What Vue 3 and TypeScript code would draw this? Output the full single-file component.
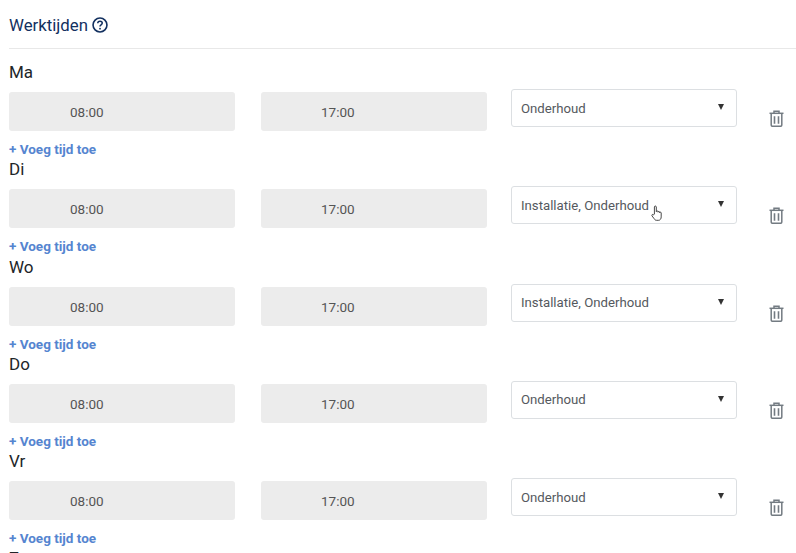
<script setup lang="ts">
interface Day {
  name: string
  services: string
  cursor?: boolean
}
const days: Day[] = [
  { name: 'Ma', services: 'Onderhoud' },
  { name: 'Di', services: 'Installatie, Onderhoud', cursor: true },
  { name: 'Wo', services: 'Installatie, Onderhoud' },
  { name: 'Do', services: 'Onderhoud' },
  { name: 'Vr', services: 'Onderhoud' },
]
</script>

<template>
  <div class="page">
    <header class="head">
      <h2 class="title">Werktijden</h2>
      <svg class="help" width="16" height="16" viewBox="0 0 17 17" fill="none">
        <circle cx="8.5" cy="8.5" r="7.4" stroke="#12305f" stroke-width="1.7" />
        <path d="M6.1 6.7c0-1.4 1.1-2.3 2.4-2.3s2.4.9 2.4 2.1c0 1.9-2.4 1.8-2.4 3.6" stroke="#12305f" stroke-width="1.6" fill="none" />
        <circle cx="8.5" cy="12.4" r="1" fill="#12305f" />
      </svg>
    </header>
    <section v-for="d in days" :key="d.name" class="day">
      <div class="label">{{ d.name }}</div>
      <div class="row">
        <div class="time">08:00</div>
        <div class="time">17:00</div>
        <div class="select">
          <span>{{ d.services }}</span>
          <span class="caret"></span>
          <svg v-if="d.cursor" class="cursor" width="12" height="17" viewBox="0 0 12 17" fill="#fff" stroke="#333" stroke-width="0.9">
            <path d="M3.4 9.2V2c0-1.3 1.9-1.3 1.9 0v4.6c0-1 1.7-1 1.7 0v.6c0-1 1.6-1 1.6 0v.6c0-.9 1.6-.9 1.6.1v4c0 1.8-1 3.4-2.6 3.4H5.4c-1.2 0-1.8-.8-2.4-1.8L1 10.9c-.7-1.2.9-2.2 1.7-1.1z" />
          </svg>
        </div>
        <svg class="trash" width="15" height="17" viewBox="0 0 15 17" fill="none" stroke="#737b82" stroke-width="1.5">
          <path d="M0.5 3.3h14" />
          <path d="M5 3V1.2h5V3" />
          <path d="M2.2 3.5v11.6c0 .8.5 1.2 1.2 1.2h8.2c.7 0 1.2-.4 1.2-1.2V3.5" />
          <path d="M5.5 6.2v7.6M9.5 6.2v7.6" stroke-width="1.6" />
        </svg>
      </div>
      <a class="add">+ Voeg tijd toe</a>
    </section>
    <div class="label">Za</div>
  </div>
</template>

<style scoped>
.page {
  width: 796px;
  height: 553px;
  overflow: hidden;
  background: #fff;
  font-family: Roboto, "Liberation Sans", sans-serif;
  box-sizing: border-box;
  padding-left: 9px;
}
.head {
  height: 49px;
  box-sizing: border-box;
  display: flex;
  align-items: center;
  gap: 4px;
  padding-top: 2px;
  border-bottom: 1px solid #e8e8e8;
  margin-bottom: 13px;
}
.title {
  margin: 0;
  font-size: 16.8px;
  font-weight: 400;
  color: #12305f;
}
.day {
  height: 97.25px;
}
.label {
  height: 27px;
  line-height: 21px;
  font-size: 17px;
  color: #212529;
}
.row {
  display: flex;
  align-items: flex-start;
  height: 50px;
}
.time {
  width: 226px;
  height: 39px;
  box-sizing: border-box;
  line-height: 40px;
  margin-top: 3px;
  margin-right: 26px;
  padding-left: 61px;
  background: #ececec;
  border-radius: 3px;
  font-size: 13.5px;
  color: #555;
}
.time + .time {
  margin-right: 24px;
  padding-left: 60px;
}
.select {
  position: relative;
  width: 226px;
  height: 38px;
  box-sizing: border-box;
  border: 1px solid #dcdfe2;
  border-radius: 3px;
  padding: 0 9px;
  display: flex;
  align-items: center;
  justify-content: space-between;
  font-size: 13.2px;
  color: #55595e;
}
.caret {
  width: 0;
  height: 0;
  margin-right: 3px;
  margin-bottom: 2px;
  border-left: 3.5px solid transparent;
  border-right: 3.5px solid transparent;
  border-top: 6px solid #333;
}
.cursor {
  position: absolute;
  left: 139px;
  top: 18px;
}
.trash {
  margin-left: 32px;
  margin-top: 21px;
}
.add {
  display: block;
  margin-top: 2px;
  line-height: 16px;
  font-size: 13.5px;
  font-weight: 700;
  color: #5585d0;
}
</style>

<style>
html, body {
  margin: 0;
  overflow: hidden;
}
</style>
